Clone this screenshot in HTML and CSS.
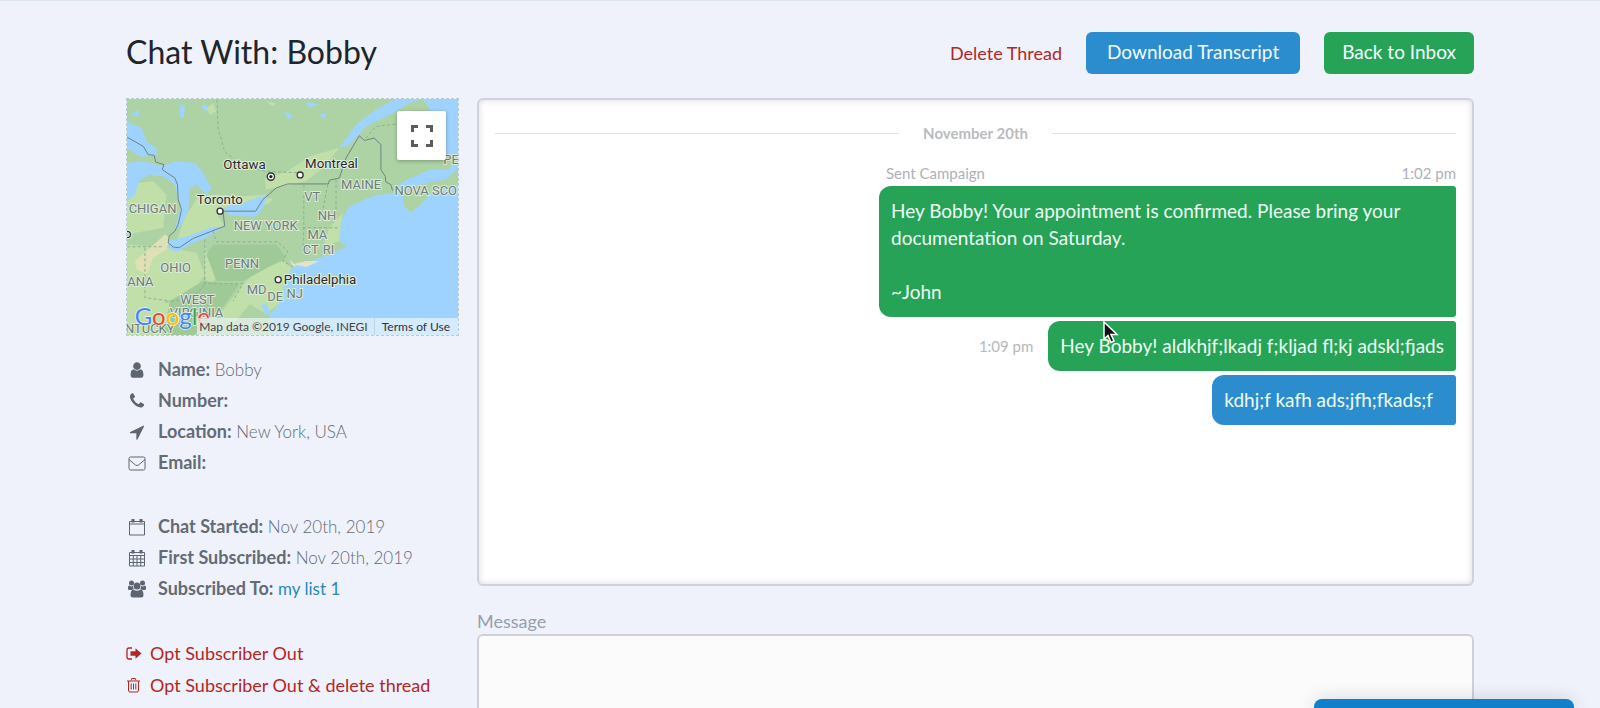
FILE: index.html
```html
<!DOCTYPE html>
<html lang="en">
<head>
<meta charset="utf-8">
<title>Chat With: Bobby</title>
<link rel="stylesheet" href="styles.css">
</head>
<body>
<div class="page">
  <header class="header">
    <h1 class="title">Chat With: Bobby</h1>
    <div class="header-actions">
      <a class="danger-link" href="#">Delete Thread</a>
      <button class="button button-blue" type="button">Download Transcript</button>
      <button class="button button-green" type="button">Back to Inbox</button>
    </div>
  </header>
  <main class="columns">
    <aside class="sidebar">
      <div class="map">
        <svg class="map-canvas" viewBox="51 42 996 711" preserveAspectRatio="xMidYMid slice" role="img" aria-label="Map of the northeastern United States">
          <rect x="51" y="42" width="996" height="711" fill="#add3a5"/>
          <!-- farmland and lowland -->
          <g fill="#c0dfa9">
            <path d="M200 470L225 400 265 335 320 330 400 335 470 330 455 355 400 352 345 370 325 395 345 425 250 460 200 475Z"/>
            <path d="M465 280L530 262 600 215 690 190 640 250 590 290 520 305 470 315Z"/>
            <path d="M51 480L175 490 260 505 285 570 240 640 160 660 51 655Z"/>
            <path d="M51 300L130 290 170 330 160 430 51 450Z"/>
            <path d="M330 690L400 600 440 560 520 530 560 560 530 640 470 690 420 660 370 720Z"/>
            <path d="M285 490L310 540 330 575 300 600 285 580Z"/>
            <path d="M51 655L180 655 200 753 51 753ZM600 505L690 470 700 385 660 430 640 490Z"/>
            <path d="M290 70L310 55 320 80 300 90ZM470 50L500 55 490 65ZM395 350L490 340 480 355 430 375Z"/>
          </g>
          <path d="M310 480L500 480 530 520 400 590 320 590 290 510ZM180 650L280 590 390 600 330 680 250 753 160 753Z" fill="#9fca98"/>
          <path d="M75 530L110 500 165 450 180 460 170 495 130 520 110 570 80 555ZM540 525L560 545 630 530 600 545 550 550Z" fill="#dfe0b6"/>
          <!-- ocean, gulf and lakes -->
          <g fill="#9fd3ff">
            <path d="M860 42L800 75 740 120 690 190 720 180 770 125 860 80 900 55 940 42Z"/>
            <path d="M940 42L960 70 955 130 930 190 930 225 1047 225V42Z"/>
            <path d="M1047 190L1020 255 960 255 895 285 870 300 850 325 790 335 720 365 695 410 690 470 712 488 680 500 620 525 545 550 530 590 530 630 500 670 480 690 490 753 1047 753V300L990 300 960 320 930 360 905 385 885 365 880 330 930 300 1010 285 1047 250Z"/>
            <path d="M51 110L95 130 110 170 140 190 140 215 90 215 51 190Z"/>
            <path d="M51 235L100 230 160 245 200 230 255 235 280 265 305 310 290 330 260 300 240 310 235 380 215 420 195 440 210 370 195 300 160 275 120 270 90 285 75 330 51 350Z"/>
            <path d="M340 377L365 357 400 355 455 335 475 335 455 380 435 397 360 392Z"/>
            <path d="M175 470L235 455 300 430 345 425 290 460 250 475 200 503 175 490Z"/>
            <path d="M60 130L80 140 75 155 60 150ZM210 58L225 62 222 100 210 95ZM275 65L292 60 290 85ZM520 80L550 90 540 105ZM590 50L630 60 600 68ZM630 90L650 85 645 105ZM60 90L90 75 85 95Z"/>
            <path d="M455 660L465 690 485 690 470 660ZM520 610L530 590 525 640Z"/>
          </g>
          <path d="M905 385L880 350 890 320 945 310 1010 285 1047 280 1047 300 970 320 935 360ZM960 225L1000 240 1047 240 1047 225Z" fill="#add3a5"/>
          <path d="M550 540L590 530 630 530 590 548Z" fill="#e4e3c9"/>
          <!-- borders -->
          <g fill="none" stroke="#6d8384" stroke-width="3">
            <path d="M51 157L100 185 115 210 133 212 137 232 162 240 157 255 195 280 203 300 205 345 215 375 205 420 195 440 178 455 175 475 190 488 208 490 250 462 345 425 340 380 438 380 460 345 500 310 535 298 657 298 660 287 690 280 710 220 750 153 765 167 795 160 815 180 815 255 828 275 830 292 845 300 850 318"/>
          </g>
          <g fill="none" stroke="#8eae91" stroke-width="3" stroke-dasharray="9 7">
            <path d="M322 45L325 130 345 200 400 245 470 260 580 265M51 487H160M105 490V640L180 650M285 465V598H400L370 650M310 440L320 472H505L535 500 520 530 555 550M583 300V440L580 500M655 300L640 380M680 285V400M580 430H690M770 160L800 125 860 118M285 600L250 640 160 655"/>
          </g>
          <g class="map-region">
            <text x="56" y="384">CHIGAN</text><text x="695" y="313">MAINE</text><text x="856" y="332">NOVA SCO</text><text x="1003" y="239">PEI</text>
            <text x="584" y="350">VT</text><text x="625" y="406">NH</text><text x="372" y="436">NEW YORK</text><text x="594" y="465">MA</text>
            <text x="580" y="509">CT</text><text x="640" y="509">RI</text><text x="346" y="550">PENN</text><text x="151" y="563">OHIO</text>
            <text x="52" y="604">ANA</text><text x="411" y="629">MD</text><text x="473" y="650">DE</text><text x="531" y="642">NJ</text>
            <text x="211" y="660">WEST</text><text x="180" y="698">VIRGINIA</text><text x="45" y="748">NTUCKY</text>
          </g>
          <g class="map-city">
            <text x="341" y="252">Ottawa</text><text x="587" y="250">Montreal</text><text x="261" y="358">Toronto</text><text x="523" y="599">Philadelphia</text><text x="42" y="460">o</text>
          </g>
          <g fill="#fff" stroke="#333" stroke-width="4">
            <circle cx="484" cy="276" r="11"/><circle cx="572" cy="271" r="9"/><circle cx="331" cy="380" r="9"/><circle cx="506" cy="586" r="9"/>
          </g>
          <circle cx="484" cy="276" r="5" fill="#222"/>
          <text class="map-logo" x="74" y="722"><tspan fill="#4285f4">G</tspan><tspan fill="#ea4335">o</tspan><tspan fill="#fbbc05">o</tspan><tspan fill="#4285f4">g</tspan><tspan fill="#34a853">l</tspan><tspan fill="#ea4335">e</tspan></text>
        </svg>
        <button class="map-fullscreen" type="button" aria-label="Toggle fullscreen view">
          <svg width="22" height="22" viewBox="0 0 22 22" fill="none" stroke="#5c5c5c" stroke-width="3"><path d="M1.500 7V1.500H7M15 1.500H20.500V7M20.500 15V20.500H15M7 20.500H1.500V15"/></svg>
        </button>
        <div class="map-credit"><span class="map-data">Map data ©2019 Google, INEGI</span><a class="map-terms" href="#">Terms of Use</a></div>
      </div>

      <ul class="details">
        <li class="detail"><svg class="icon" viewBox="0 0 1792 1792"><path d="M1536 1399q0 109-62.500 187t-150.500 78h-854q-88 0-150.500-78t-62.500-187q0-85 8.500-160.500t31.500-152 58.500-131 94-89 134.500-34.500q131 128 313 128t313-128q76 0 134.500 34.500t94 89 58.500 131 31.500 152 8.500 160.500zm-256-887q0 159-112.500 271.500t-271.500 112.500-271.500-112.500-112.500-271.500 112.500-271.500 271.500-112.500 271.500 112.500 112.500 271.500z"/></svg><span><b>Name:</b> Bobby</span></li>
        <li class="detail"><svg class="icon" viewBox="0 0 1792 1792"><path d="M1600 1240q0 27-10 70.500t-21 68.500q-21 50-122 106-94 51-186 51-27 0-53-3.500t-57.500-12.500-47-14.500-55.500-20.500-49-18q-98-35-175-83-127-79-264-216t-216-264q-48-77-83-175-3-9-18-49t-20.500-55.500-14.500-47-12.500-57.500-3.500-53q0-92 51-186 56-101 106-122 25-11 68.500-21t70.500-10q14 0 21 3 18 6 53 76 11 19 30 54t35 63.500 31 53.500q3 4 17.500 25t21.500 35.500 7 28.500q0 20-28.500 50t-62 55-62 53-28.500 46q0 9 5 22.500t8.500 20.500 14 24 11.500 19q76 137 174 235t235 174q2 1 19 11.500t24 14 20.500 8.500 22.500 5q18 0 46-28.500t53-62 55-62 50-28.500q14 0 28.500 7t35.500 21.500 25 17.500q25 15 53.500 31t63.500 35 54 30q70 35 76 53 3 7 3 21z"/></svg><span><b>Number:</b></span></li>
        <li class="detail"><svg class="icon" viewBox="0 0 1792 1792"><path d="M1593 349l-640 1280q-17 35-57 35-5 0-15-2-22-5-35.500-22.500t-13.500-39.500v-576h-576q-22 0-39.500-13.500t-22.500-35.500 4-42 29-30l1280-640q13-7 29-7 27 0 45 19 15 14 18.500 34.500t-6.500 39.500z"/></svg><span><b>Location:</b> New York, USA</span></li>
        <li class="detail"><svg class="icon icon-line" viewBox="0 0 18 18"><rect x="1" y="3" width="16" height="13" rx="1.500"/><path d="M1 5.500L7.500 11Q9 12 10.500 11L17 5.500"/></svg><span><b>Email:</b></span></li>
      </ul>
      <ul class="details">
        <li class="detail"><svg class="icon icon-line" viewBox="0 0 18 18"><path d="M1.500 3.500H16.500V17H1.500ZM1.500 6H16.500"/><path d="M5 1V4.500M13 1V4.500" stroke-width="3"/></svg><span><b>Chat Started:</b> Nov 20th, 2019</span></li>
        <li class="detail"><svg class="icon icon-line" viewBox="0 0 18 18"><path d="M1.500 3.500H16.500V17H1.500ZM1.500 6.500H16.500M1.500 10H16.500M1.500 13.500H16.500M5.300 6.500V17M9 6.500V17M12.700 6.500V17"/><path d="M5 1V4.500M13 1V4.500" stroke-width="3"/></svg><span><b>First Subscribed:</b> Nov 20th, 2019</span></li>
        <li class="detail"><svg class="icon" viewBox="0 0 18 18"><circle cx="3.500" cy="3" r="2.500"/><circle cx="14.500" cy="3" r="2.500"/><path d="M0 9V7.500Q0 5.500 1.300 5.500Q3.500 7 5 6Q4.700 8 5.800 9Q4.500 9.300 3.700 10H1.500Q0 10 0 9ZM18 9V7.500Q18 5.500 16.700 5.500Q14.500 7 13 6Q13.300 8 12.200 9Q13.500 9.300 14.300 10H16.500Q18 10 18 9Z"/><circle cx="9" cy="6" r="3.500"/><path d="M2.500 15.500Q2.500 9.500 5.500 9.500Q9 12 12.500 9.500Q15.500 9.500 15.500 15.500Q15.500 17.500 13.300 17.500H4.700Q2.500 17.500 2.500 15.500Z"/></svg><span><b>Subscribed To:</b> <a class="list-link" href="#">my list 1</a></span></li>
      </ul>
      <ul class="details optouts">
        <li><a class="danger-link optout" href="#"><svg class="icon-small" viewBox="0 0 16 16"><path d="M6 3H3Q1 3 1 5V12Q1 14 3 14H6" fill="none" stroke="currentColor" stroke-width="1.300"/><path d="M4.500 6.300H9.500V3.300L15.500 8.500 9.500 13.700V10.700H4.500Z"/></svg>Opt Subscriber Out</a></li>
        <li><a class="danger-link optout" href="#"><svg class="icon-small icon-line" viewBox="0 0 16 16"><path d="M1 4H14M2.500 4V13Q2.500 15 4 15H11Q12.500 15 12.500 13V4M5 3.500L5.700 1.500H9.300L10 3.500M5.200 6.500V12.500M7.500 6.500V12.500M9.800 6.500V12.500"/></svg>Opt Subscriber Out &amp; delete thread</a></li>
      </ul>
    </aside>

    <section class="conversation">
      <div class="thread">
        <div class="day">November 20th</div>
        <div class="campaign">
          <div class="meta"><span>Sent Campaign</span><time>1:02 pm</time></div>
          <p class="bubble bubble-green">Hey Bobby! Your appointment is confirmed. Please bring your<br>documentation on Saturday.<br><br>~John</p>
        </div>
        <div class="message">
          <time class="stamp">1:09 pm</time>
          <p class="bubble bubble-green">Hey Bobby! aldkhjf;lkadj f;kljad fl;kj adskl;fjads
            <svg class="cursor" width="16" height="24" viewBox="0 0 16 24"><path d="M1 1V18L5 14.500 8 21.500 11 20 8 13.500H14Z" fill="#111" stroke="#fff" stroke-width="1.500"/></svg>
          </p>
        </div>
        <div class="message">
          <p class="bubble bubble-blue">kdhj;f kafh ads;jfh;fkads;f</p>
        </div>
      </div>
      <label class="field-label" for="message">Message</label>
      <textarea class="field" id="message"></textarea>
    </section>
  </main>
</div>
<button class="widget" type="button" aria-label="Open support chat"></button>
</body>
</html>
```
FILE: styles.css
```css
* { box-sizing: border-box; }
html { scrollbar-width: none; }
body {
  margin: 0;
  min-height: 100vh;
  background: #f0f2fb;
  border-top: 1px solid #dde5ee;
  color: #636b75;
  font: 18px/31px Lato, "Open Sans", sans-serif;
}
a { text-decoration: none; }
p, ul, h1 { margin: 0; padding: 0; }
ul { list-style: none; }
button { border: 0; font: inherit; cursor: pointer; }

.page { padding: 31px 126px 0; }
.header { display: flex; align-items: center; justify-content: space-between; height: 42px; }
.title { font-size: 32px; font-weight: 400; line-height: 40px; padding-bottom: 2px; color: #1e252b; }
.header-actions { display: flex; align-items: center; gap: 24px; line-height: 28px; }
.danger-link { color: #b32626; }
.button { height: 42px; padding: 0 18px 2px; border-radius: 6px; color: #f2fbff; font-size: 19px; }
.button-blue { padding: 0 21px 2px; background: #2b8dce; }
.button-green { background: #27a357; }

.columns { display: grid; grid-template-columns: 333px minmax(0, 1fr); gap: 18px; margin-top: 24px; }
.map { position: relative; height: 238px; border: 1px dashed #b5ccd4; overflow: hidden; }
.map-canvas { display: block; width: 100%; height: 100%; }
.map-region { font: 39px Roboto, sans-serif; fill: #6c7d79; stroke: #dcebd8; stroke-width: 6px; paint-order: stroke; }
.map-city { font: 40px Roboto, sans-serif; fill: #2b2b2b; stroke: #e0efdc; stroke-width: 6px; paint-order: stroke; }
.map-logo { font: 72px Lato, sans-serif; stroke: #eef5ec; stroke-width: 4px; paint-order: stroke; }
.map-fullscreen {
  position: absolute; top: 12px; right: 12px; width: 49px; height: 49px;
  display: flex; align-items: center; justify-content: center;
  padding: 0; background: #fff; border-radius: 2px; box-shadow: 0 1px 4px rgba(0, 0, 0, .3);
}
.map-credit {
  position: absolute; right: 0; bottom: 0; display: flex;
  font-size: 12px; line-height: 17px; color: #444;
}
.map-data { padding: 0 6px 0 2px; background: rgba(235, 243, 245, .7); }
.map-terms { padding: 0 8px 0 7px; border-left: 1px solid #b9d5ea; background: rgba(225, 240, 252, .8); color: #333; }

.details { margin-bottom: 33px; font-size: 17px; font-weight: 300; }
.map + .details { margin-top: 18px; }
.details b { font-size: 18px; font-weight: 700; }
.detail { display: flex; align-items: center; gap: 12px; padding-left: 2px; }
.icon { width: 18px; height: 18px; fill: #5c6570; color: #5c6570; }
.icon-line { fill: none; stroke: currentColor; stroke-width: 1; }
.icon-small { width: 16px; height: 16px; fill: currentColor; }
.icon-small.icon-line { fill: none; }
.list-link { color: #2789b8; font-weight: 400; }
.optouts { font-size: 18px; font-weight: 400; line-height: 32px; }
.optout { display: flex; align-items: center; gap: 8px; }

.thread {
  height: 488px; padding: 18px 16px;
  border: 2px solid #d0d1da; border-radius: 6px; background: #fff;
  box-shadow: inset 0 0 6px rgba(60, 60, 90, .2);
}
.day { display: flex; align-items: center; gap: 24px; margin-bottom: 14px; color: #b9bcc0; font-size: 15px; font-weight: 700; line-height: 30px; }
.day::before, .day::after { content: ""; flex: 1; border-top: 1px solid #dfe1e4; }
.campaign { width: 577px; margin-left: auto; }
.meta { display: flex; justify-content: space-between; padding: 0 0 1px 7px; color: #aeb1b5; font-size: 15px; line-height: 23px; }
.bubble { position: relative; padding: 11px 12px 12px; border-radius: 12px 3px 3px 12px; color: #edfff4; font-size: 19px; line-height: 27px; }
.bubble-green { background: #27a357; }
.bubble-blue { background: #2b8dce; padding-right: 23px; }
.message { display: flex; align-items: center; justify-content: flex-end; gap: 15px; margin-top: 4px; }
.stamp { color: #b5b8bc; font-size: 15px; }
.cursor { position: absolute; left: 55px; top: 0; }

.field-label { display: block; margin-top: 22px; color: #95a0ad; line-height: 26px; }
.field {
  display: block; width: 100%; height: 150px; padding: 12px; resize: none;
  border: 2px solid #cfd0d6; border-radius: 6px; background: #fbfbfc; font: inherit; color: inherit;
}
.widget {
  position: fixed; right: 26px; bottom: 0; width: 260px; height: 9px;
  border-radius: 8px 8px 0 0; background: #127fcb; box-shadow: 0 2px 18px rgba(0, 40, 60, .25);
}
```
